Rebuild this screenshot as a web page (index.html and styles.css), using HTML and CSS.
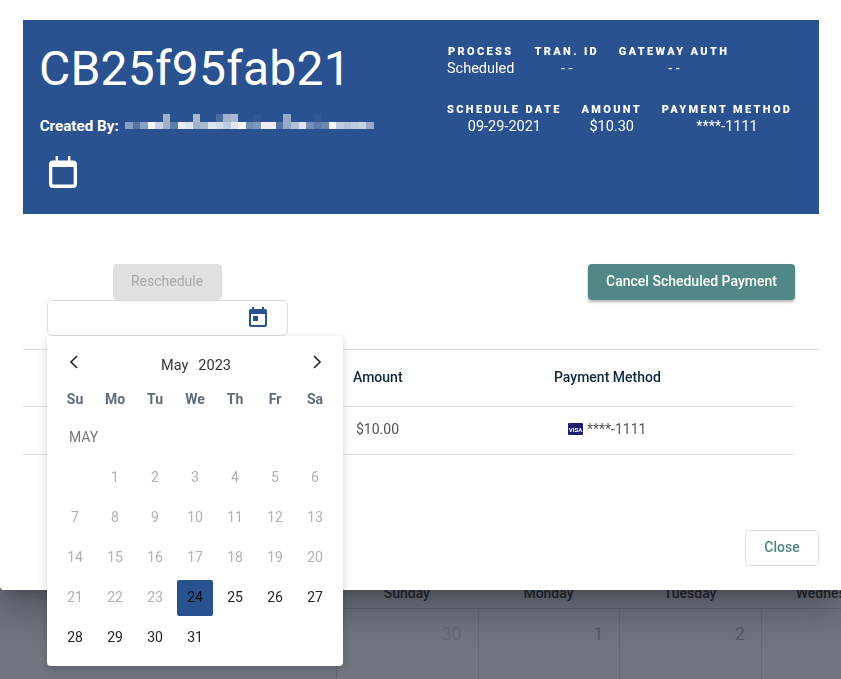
FILE: index.html
```html
<!DOCTYPE html>
<html lang="en">
<head>
<meta charset="utf-8">
<title>Scheduled payment</title>
<link rel="stylesheet" href="styles.css">
</head>
<body>
<main class="page">
  <div class="cal">
    <div class="cal-head">Sunday</div><div class="cal-head">Monday</div><div class="cal-head">Tuesday</div><div class="cal-head">Wednesday</div>
    <div class="cal-cell muted">30</div><div class="cal-cell">1</div><div class="cal-cell">2</div><div class="cal-cell"></div>
  </div>
</main>
<div class="backdrop"></div>
<section class="dialog">
  <header class="hero">
    <div class="hero-left">
      <h1 class="title">CB25f95fab21</h1>
      <div class="created"><b>Created By:</b>
        <svg class="blur" width="249" height="15.300" viewBox="0 0 33 2" preserveAspectRatio="none" shape-rendering="crispEdges" aria-hidden="true" fill="#fff">
          <rect x="5" y="0" width="1" height="1" fill-opacity=".55"/><rect x="9" y="0" width="1" height="1" fill-opacity=".6"/><rect x="12" y="0" width="1" height="1" fill-opacity=".15"/><rect x="13" y="0" width="1" height="1" fill-opacity=".55"/><rect x="14" y="0" width="1" height="1" fill-opacity=".6"/><rect x="17" y="0" width="1" height="1" fill-opacity=".04"/><rect x="21" y="0" width="1" height="1" fill-opacity=".5"/><rect x="25" y="0" width="1" height="1" fill-opacity=".04"/>
          <rect x="0" y="1" width="1" height="1" fill-opacity=".45"/><rect x="1" y="1" width="1" height="1" fill-opacity=".2"/><rect x="2" y="1" width="1" height="1" fill-opacity=".45"/><rect x="3" y="1" width="1" height="1" fill-opacity=".95"/><rect x="4" y="1" width="1" height="1" fill-opacity=".75"/><rect x="5" y="1" width="1" height="1" fill-opacity=".55"/><rect x="6" y="1" width="1" height="1" fill-opacity=".25"/><rect x="7" y="1" width="1" height="1" fill-opacity=".9"/><rect x="8" y="1" width="1" height="1" fill-opacity=".85"/><rect x="9" y="1" width="1" height="1" fill-opacity=".55"/><rect x="10" y="1" width="1" height="1" fill-opacity=".6"/><rect x="11" y="1" width="1" height="1" fill-opacity=".85"/><rect x="12" y="1" width="1" height="1" fill-opacity=".8"/><rect x="13" y="1" width="1" height="1" fill-opacity=".7"/><rect x="14" y="1" width="1" height="1" fill-opacity=".85"/><rect x="15" y="1" width="1" height="1" fill-opacity=".95"/><rect x="16" y="1" width="1" height="1" fill-opacity=".35"/><rect x="17" y="1" width="1" height="1" fill-opacity=".4"/><rect x="18" y="1" width="1" height="1" fill-opacity=".9"/><rect x="19" y="1" width="1" height="1" fill-opacity=".9"/><rect x="20" y="1" width="1" height="1" fill-opacity=".2"/><rect x="21" y="1" width="1" height="1" fill-opacity=".5"/><rect x="22" y="1" width="1" height="1" fill-opacity=".65"/><rect x="23" y="1" width="1" height="1" fill-opacity=".85"/><rect x="24" y="1" width="1" height="1" fill-opacity=".35"/><rect x="25" y="1" width="1" height="1" fill-opacity=".25"/><rect x="26" y="1" width="1" height="1" fill-opacity=".3"/><rect x="27" y="1" width="1" height="1" fill-opacity=".95"/><rect x="28" y="1" width="1" height="1" fill-opacity=".7"/><rect x="29" y="1" width="1" height="1" fill-opacity=".65"/><rect x="30" y="1" width="1" height="1" fill-opacity=".7"/><rect x="31" y="1" width="1" height="1" fill-opacity=".75"/><rect x="32" y="1" width="1" height="1" fill-opacity=".5"/>
        </svg>
      </div>
      <svg class="hero-icon" viewBox="0 0 28 32" aria-hidden="true"><path fill="#fff" fill-rule="evenodd" d="M6.600 0H9v4.500h10V0h2.400v4.500h3.100C26.400 4.500 28 6.100 28 8v20.500c0 1.900-1.600 3.500-3.500 3.500h-21C1.600 32 0 30.400 0 28.500V8c0-1.900 1.600-3.500 3.500-3.500h3.100zM3.300 11v16.900c0 .3.200.5.500.5h20.400c.3 0 .5-.2.500-.5V11z"/></svg>
    </div>
    <div class="hero-right">
      <div class="facts">
        <div class="fact fact-wide"><span class="label">PROCESS</span><span class="value">Scheduled</span></div>
        <div class="fact"><span class="label">TRAN. ID</span><span class="value">- -</span></div>
        <div class="fact"><span class="label">GATEWAY AUTH</span><span class="value">- -</span></div>
      </div>
      <div class="facts">
        <div class="fact"><span class="label">SCHEDULE DATE</span><span class="value">09-29-2021</span></div>
        <div class="fact"><span class="label">AMOUNT</span><span class="value">$10.30</span></div>
        <div class="fact"><span class="label">PAYMENT METHOD</span><span class="value">****-1111</span></div>
      </div>
    </div>
  </header>

  <div class="actions">
    <div class="resched">
      <button class="btn btn-disabled" type="button">Reschedule</button>
      <div class="date-input">
        <svg class="today" viewBox="0 0 24 24" aria-hidden="true"><path d="M19 3h-1V1h-2v2H8V1H6v2H5c-1.110 0-1.990.9-1.990 2L3 19c0 1.100.89 2 2 2h14c1.100 0 2-.9 2-2V5c0-1.100-.9-2-2-2zm0 16H5V8h14v11zM7 10h5v5H7z"/></svg>
      </div>
    </div>
    <button class="btn btn-primary" type="button">Cancel Scheduled Payment</button>
  </div>

  <div class="table">
    <div class="row row-head"><span class="c-amount">Amount</span><span class="c-method">Payment Method</span></div>
    <div class="row row-body"><span class="c-amount c-val">$10.00</span><span class="c-method c-card">
      <svg class="visa" viewBox="0 0 15 12" aria-hidden="true"><rect width="15" height="12" rx="1" fill="#1a1f71"/></svg><i class="visa-t">VISA</i>****-1111</span></div>
  </div>

  <footer class="foot"><button class="btn btn-close" type="button">Close</button></footer>
</section>

<div class="picker">
  <div class="picker-top">
    <svg class="chev" viewBox="0 0 10 16" aria-hidden="true"><path d="M8 2 2 8l6 6"/></svg>
    <div class="picker-title"><span>May</span><span>2023</span></div>
    <svg class="chev" viewBox="0 0 10 16" aria-hidden="true"><path d="m2 2 6 6-6 6"/></svg>
  </div>
  <div class="week"><span>Su</span><span>Mo</span><span>Tu</span><span>We</span><span>Th</span><span>Fr</span><span>Sa</span></div>
  <div class="month">MAY</div>
  <div class="days">
    <span></span><span class="off">1</span><span class="off">2</span><span class="off">3</span><span class="off">4</span><span class="off">5</span><span class="off">6</span>
    <span class="off">7</span><span class="off">8</span><span class="off">9</span><span class="off">10</span><span class="off">11</span><span class="off">12</span><span class="off">13</span>
    <span class="off">14</span><span class="off">15</span><span class="off">16</span><span class="off">17</span><span class="off">18</span><span class="off">19</span><span class="off">20</span>
    <span class="off">21</span><span class="off">22</span><span class="off">23</span><span class="sel">24</span><span>25</span><span>26</span><span>27</span>
    <span>28</span><span>29</span><span>30</span><span>31</span>
  </div>
</div>
</body>
</html>
```
FILE: styles.css
```css
* { box-sizing: border-box; }
html, body { margin: 0; height: 679px; overflow: hidden; }
body { font-family: Roboto, "Liberation Sans", sans-serif; background: #fff; color: #222; }

.page { height: 679px; padding: 583px 0 0 336px; width: 1000px; background: #fff; }
.cal { display: grid; grid-template-columns: repeat(4, 141.67px); grid-template-rows: 26px 70px; }
.cal-head { text-align: center; font-size: 14px; font-weight: 500; line-height: 20px; color: #111; border-bottom: 1px solid #d0d3d8; }
.cal-cell { border-left: 1px solid #d8dade; text-align: right; padding: 13px 16px 0 0; font-size: 18px; line-height: 24px; color: #adadad; }
.cal-cell.muted { color: #dfdfdf; }
.backdrop { position: fixed; inset: 0; background: rgba(45,52,67,.68); }

.dialog { position: fixed; left: 0; right: 0; top: 0; height: 590px; background: #fff; border-radius: 0 0 0 4px; padding: 20px 22px 0 23px; box-shadow: 0 11px 15px -7px rgba(0,0,0,.2), 0 24px 38px 3px rgba(0,0,0,.14), 0 9px 46px 8px rgba(0,0,0,.12); }

.hero { height: 194px; background: #2a5290; color: #fff; display: flex; padding: 21px 0 0 16px; }
.hero-left { width: 408px; }
.title { margin: 0; font-size: 48px; font-weight: 400; line-height: 56px; letter-spacing: .2px; }
.created { display: flex; align-items: flex-start; gap: 6.300px; margin-top: 19px; padding-left: .7px; font-size: 15.200px; line-height: 20px; height: 20px; }
.created b { font-weight: 700; }
.blur { display: block; margin-top: -2px; }
.hero-icon { display: block; width: 28px; height: 32px; margin: 20px 0 0 10px; }

.hero-right { display: flex; flex-direction: column; gap: 20px; padding-top: 4px; }
.facts { display: flex; gap: 19.600px; height: 38px; }
.fact { display: flex; flex-direction: column; align-items: center; }
.fact-wide { margin-right: .4px; }
.label { font-size: 11px; font-weight: 900; letter-spacing: 2.350px; line-height: 14px; }
.value { font-size: 14.500px; line-height: 18px; padding-top: 1px; }

.actions { display: flex; justify-content: space-between; padding: 50px 24px 0 24px; height: 135px; }
.resched { width: 241px; display: flex; flex-direction: column; align-items: center; }
.btn { font-family: inherit; font-size: 14px; font-weight: 500; border: 0; border-radius: 4px; height: 36px; cursor: pointer; padding: 0 0 2px; }
.btn-disabled { background: #e0e0e0; color: #a8a8a8; width: 109px; margin-left: -1px; font-weight: 400; }
.date-input { width: 241px; height: 36px; border: 1px solid #dcdcdc; border-radius: 5px; background: #fff; display: flex; justify-content: flex-end; align-items: center; padding-right: 17px; }
.today { width: 24px; height: 24px; fill: #2a5290; }
.btn-primary { background: #4f8886; color: #fff; width: 207px; box-shadow: 0 2px 3px rgba(0,0,0,.3); }

.table { border-top: 1px solid #dfdfdf; padding-right: 24px; }
.row { display: flex; border-bottom: 1px solid #dfdfdf; font-size: 14px; }
.row-head { height: 57px; align-items: center; font-weight: 500; color: #10283c; padding-bottom: 2px; }
.row-body { height: 48px; align-items: center; color: #555; padding-bottom: 3px; }
.c-amount { margin-left: 330px; width: 201px; }
.c-val { padding-left: 3px; }
.c-method { display: flex; align-items: center; }
.c-card { padding-left: 14px; position: relative; }
.visa { width: 15px; height: 12px; margin-right: 4px; }
.visa-t { position: absolute; left: 14px; width: 15px; text-align: center; font-size: 6px; font-weight: 700; font-style: normal; color: #fff; }

.foot { display: flex; justify-content: flex-end; padding-top: 75px; }
.btn-close { background: #fff; border: 1px solid #dfdfdf; color: #4f8886; width: 74px; }

.picker { position: fixed; left: 47px; top: 336px; width: 296px; height: 330px; background: #fff; border-radius: 4px; box-shadow: 0 3px 10px rgba(0,0,0,.18); }
.picker-top { display: flex; justify-content: space-between; align-items: center; height: 52px; padding: 0 19px 0 20px; }
.chev { width: 14px; height: 16px; fill: none; stroke: #222; stroke-width: 1.600; }
.picker-title { display: flex; gap: 10px; font-size: 14.500px; color: #333; padding: 6px 0 0 1px; }
.week, .days { display: grid; grid-template-columns: repeat(7, 40px); padding-left: 8px; text-align: center; }
.week { font-size: 14px; font-weight: 700; color: #5c6b7e; line-height: 22px; }
.month { font-size: 14px; color: #777; padding-left: 22px; line-height: 20px; margin-top: 17px; height: 30px; }
.days { font-size: 14px; }
.days span { height: 40px; display: flex; align-items: center; justify-content: center; color: #222; }
.days span.off { color: #b0b0b0; }
.days span.sel { background: #2a5290; color: #111; border-radius: 2px; width: 36px; height: 36px; margin: 3px 2px 1px; padding-bottom: 2px; }
```
